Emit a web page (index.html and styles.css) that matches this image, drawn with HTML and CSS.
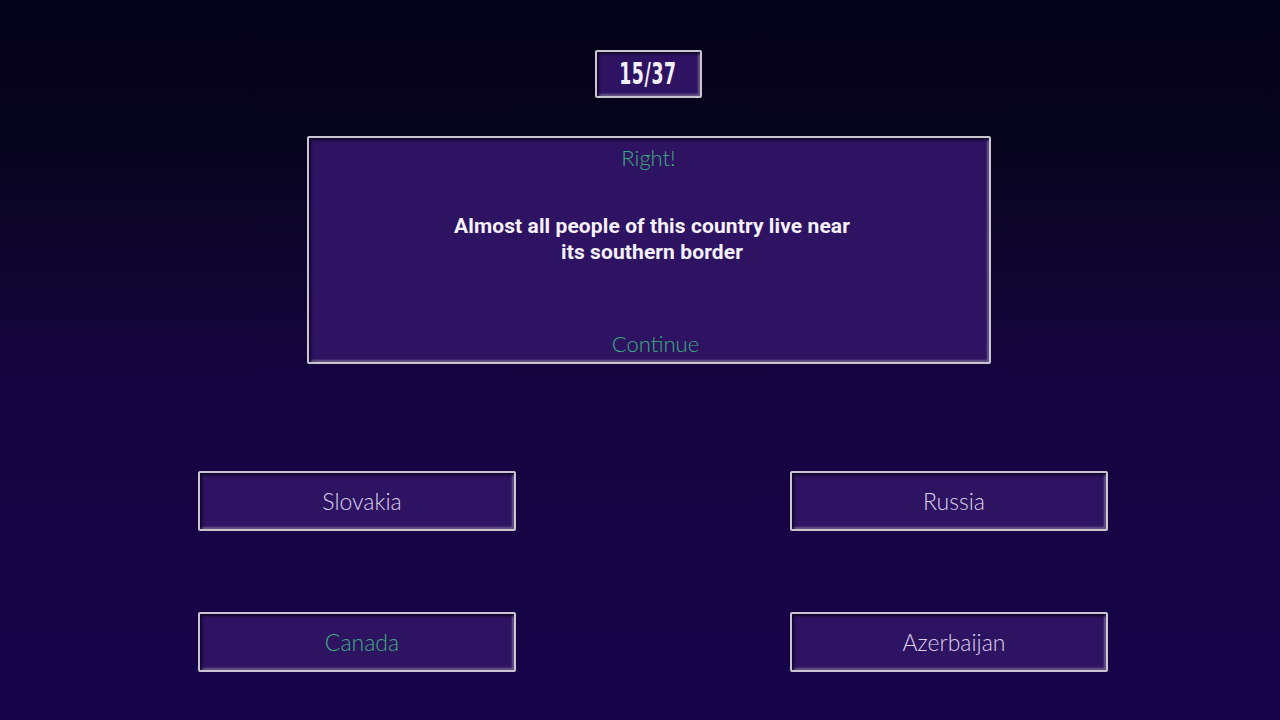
FILE: index.html
```html
<!DOCTYPE html>
<html lang="en">
<head>
    <meta charset="UTF-8">
    <meta name="viewport" content="width=device-width, initial-scale=1.0">
    <title>Quiz</title>
    <link rel="stylesheet" href="styles.css">
</head>
<body>

    <div class="screen">
        <div class="counter panel"><span class="counter-value">15/37</span></div>

        <div class="question panel">
            <div class="verdict">Right!</div>
            <div class="question-text">Almost all people of this country live near<br>its southern border</div>
            <div class="continue">Continue</div>
        </div>

        <div class="answers">
            <div class="answer panel">Slovakia</div>
            <div class="answer panel">Russia</div>
            <div class="answer panel correct">Canada</div>
            <div class="answer panel">Azerbaijan</div>
        </div>
    </div>

</body>
</html>
```

FILE: styles.css
```css
body {
    margin: 0;
    padding: 0;
    height: 720px;
    overflow: hidden;
    background: linear-gradient(to bottom, #05031a 0%, #07041d 20%, #0e0530 38%, #15043f 52%, #17044a 100%);
    font-family: Lato, "Open Sans", sans-serif;
}
.screen {
    display: flex;
    flex-direction: column;
    align-items: center;
    padding-top: 50px;
}
.panel {
    box-sizing: border-box;
    background-color: #2f1363;
    border: 2px solid #c9c6cf;
    border-radius: 2px;
    box-shadow: inset 2px 2px 3px #100628, inset -2px -2px 2px #6a5a8a;
}
.counter {
    width: 107px;
    height: 48px;
    margin-left: 16px;
    display: flex;
    align-items: center;
    justify-content: center;
}
/* narrow display digits: squeeze the condensed face */
.counter-value {
    display: inline-block;
    color: #f2f0f8;
    font-family: "DejaVu Sans Condensed", "DejaVu Sans", sans-serif;
    font-weight: bold;
    font-size: 30px;
    line-height: 1;
    letter-spacing: 1px;
    transform: scaleX(0.64);
}
.question {
    width: 684px;
    height: 228px;
    margin-top: 38px;
    margin-left: 17px;
    display: flex;
    flex-direction: column;
    align-items: center;
    padding: 6px 0 5px;
}
.verdict {
    color: #3aae7c;
    font-size: 22px;
    font-weight: 300;
}
.question-text {
    margin-top: 42px;
    padding-left: 7px;
    color: #f4f2f8;
    font-family: Roboto, sans-serif;
    font-weight: bold;
    font-size: 21px;
    line-height: 26px;
    letter-spacing: 0.1px;
    text-align: center;
}
.continue {
    margin-top: auto;
    margin-left: 14px;
    color: #3aae7c;
    font-size: 22px;
    font-weight: 300;
}
.answers {
    display: grid;
    grid-template-columns: 318px 318px;
    grid-template-rows: 60px 60px;
    column-gap: 274px;
    row-gap: 81px;
    margin-top: 107px;
    margin-left: 26px;
}
.answer {
    display: flex;
    align-items: center;
    justify-content: center;
    padding-left: 10px;
    color: #d9d2ea;
    font-size: 23px;
    font-weight: 300;
}
.answer.correct {
    color: #3aae7c;
}
```
